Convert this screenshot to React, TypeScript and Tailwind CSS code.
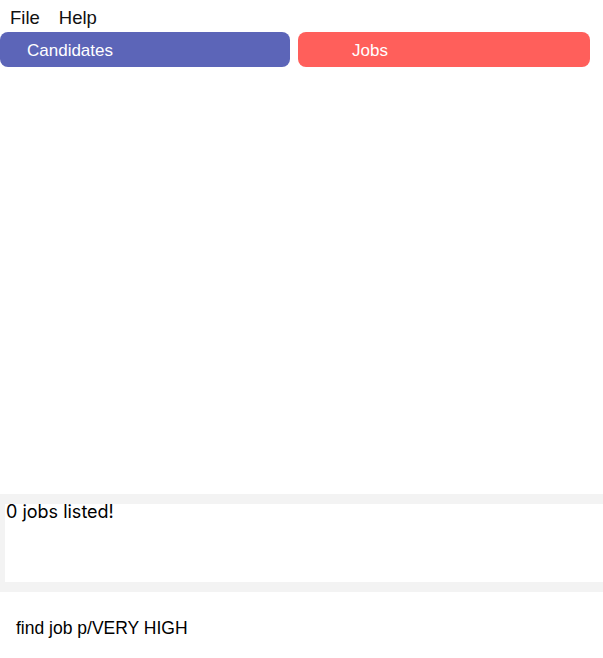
export default function App() {
  return (
    <div className="w-[603px] h-[658px] bg-white flex flex-col overflow-hidden">
      <div className="h-[32px] flex items-center pl-[10px] gap-[19px] text-[18.5px] text-[#111] font-['Liberation_Sans',Arial,sans-serif] pt-[3px]">
        <span>File</span>
        <span>Help</span>
      </div>
      <div className="flex h-[35px] gap-[8px] pr-[13px] font-['Liberation_Sans',Arial,sans-serif] text-[17px] text-white">
        <div className="w-[290px] h-full rounded-[8px] bg-[#5c65b8] flex items-center pl-[27px] pt-[2px]">Candidates</div>
        <div className="flex-1 h-full rounded-[8px] bg-[#ff5f5b] flex items-center pl-[54px] pt-[2px]">Jobs</div>
      </div>
      <div className="h-[427px]" />
      <div className="h-[98px] bg-[#f3f3f3] pt-[10px] pb-[10px] pl-[5px]">
        <div className="h-full bg-white pl-[1px] text-[18px] leading-[16px] text-black font-['Inter','Noto_Sans',sans-serif]">
          0 jobs listed!
        </div>
      </div>
      <div className="flex-1 pl-[16px] pt-[23px] text-[17.5px] text-black font-['Liberation_Sans',Arial,sans-serif]">
        find job p/VERY HIGH
      </div>
    </div>
  );
}
